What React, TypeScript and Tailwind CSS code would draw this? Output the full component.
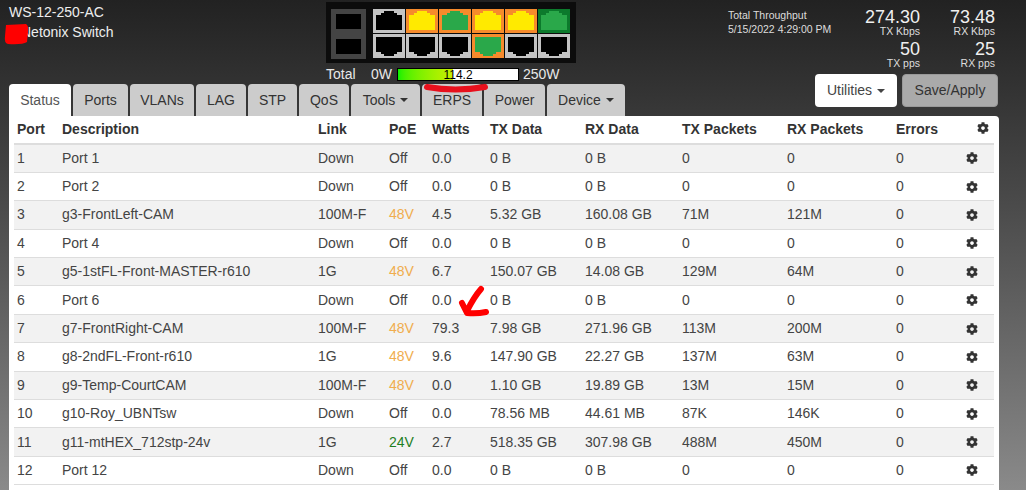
import { FaCog } from "react-icons/fa";

const TOP_PORTS = [
  { bg: "#c4c4c4", fill: "#000000" },
  { bg: "#f68b2c", fill: "#ffea00" },
  { bg: "#f68b2c", fill: "#2aa84a" },
  { bg: "#f68b2c", fill: "#ffea00" },
  { bg: "#f68b2c", fill: "#ffea00" },
  { bg: "#0c7a2c", fill: "#2aa84a" },
];

const BOTTOM_PORTS = [
  { bg: "#c4c4c4", fill: "#000000" },
  { bg: "#c4c4c4", fill: "#000000" },
  { bg: "#c4c4c4", fill: "#000000" },
  { bg: "#f68b2c", fill: "#2aa84a" },
  { bg: "#c4c4c4", fill: "#000000" },
  { bg: "#c4c4c4", fill: "#000000" },
];

const TABS = [
  { label: "Status", width: "w-[62px]", active: true },
  { label: "Ports", width: "w-[55px]" },
  { label: "VLANs", width: "w-[64px]" },
  { label: "LAG", width: "w-[50px]" },
  { label: "STP", width: "w-[49px]" },
  { label: "QoS", width: "w-[50px]" },
  { label: "Tools", width: "w-[69px]", caret: true },
  { label: "ERPS", width: "w-[60px]" },
  { label: "Power", width: "w-[61px]" },
  { label: "Device", width: "w-[78px]", caret: true },
];

const HEADERS = [
  "Port",
  "Description",
  "Link",
  "PoE",
  "Watts",
  "TX Data",
  "RX Data",
  "TX Packets",
  "RX Packets",
  "Errors",
];

const ROWS = [
  ["1", "Port 1", "Down", "Off", "0.0", "0 B", "0 B", "0", "0", "0"],
  ["2", "Port 2", "Down", "Off", "0.0", "0 B", "0 B", "0", "0", "0"],
  ["3", "g3-FrontLeft-CAM", "100M-F", "48V", "4.5", "5.32 GB", "160.08 GB", "71M", "121M", "0"],
  ["4", "Port 4", "Down", "Off", "0.0", "0 B", "0 B", "0", "0", "0"],
  ["5", "g5-1stFL-Front-MASTER-r610", "1G", "48V", "6.7", "150.07 GB", "14.08 GB", "129M", "64M", "0"],
  ["6", "Port 6", "Down", "Off", "0.0", "0 B", "0 B", "0", "0", "0"],
  ["7", "g7-FrontRight-CAM", "100M-F", "48V", "79.3", "7.98 GB", "271.96 GB", "113M", "200M", "0"],
  ["8", "g8-2ndFL-Front-r610", "1G", "48V", "9.6", "147.90 GB", "22.27 GB", "137M", "63M", "0"],
  ["9", "g9-Temp-CourtCAM", "100M-F", "48V", "0.0", "1.10 GB", "19.89 GB", "13M", "15M", "0"],
  ["10", "g10-Roy_UBNTsw", "Down", "Off", "0.0", "78.56 MB", "44.61 MB", "87K", "146K", "0"],
  ["11", "g11-mtHEX_712stp-24v", "1G", "24V", "2.7", "518.35 GB", "307.98 GB", "488M", "450M", "0"],
  ["12", "Port 12", "Down", "Off", "0.0", "0 B", "0 B", "0", "0", "0"],
];

const GRID = "grid grid-cols-[45px_256px_71px_43px_58px_95px_97px_105px_109px_70px_1fr]";

function poeColor(value: string) {
  if (value === "48V") return "text-[#f0ad4e]";
  if (value === "24V") return "text-[#1e7e1e]";
  return "";
}

function Port({ bg, fill, flip }: { bg: string; fill: string; flip?: boolean }) {
  return (
    <svg width="32" height="24" viewBox="0 0 32 24" className="block">
      <rect width="32" height="24" fill={bg} />
      <polygon
        fill={fill}
        transform={flip ? "matrix(1 0 0 -1 0 24)" : undefined}
        points="3,21 3,6 8,6 8,4 11,4 11,2 21,2 21,4 24,4 24,6 29,6 29,21"
      />
    </svg>
  );
}

function Sfp() {
  return <div className="w-[35px] h-[25px] border-[5px] border-[#444444] bg-black" />;
}

function Caret() {
  return (
    <span className="inline-block ml-[5px] align-middle border-x-[4px] border-t-[4px] border-x-transparent border-t-current" />
  );
}

function Stat({ value, label }: { value: string; label: string }) {
  return (
    <div className="text-right h-[32px]">
      <div className="text-[18px] leading-[18px] text-[#f0f0f0]">{value}</div>
      <div className="text-[10.5px] leading-[11px] text-[#dddddd]">{label}</div>
    </div>
  );
}

export default function App() {
  const watts = 114.2;

  return (
    <div className="relative h-[490px] w-[1026px] overflow-hidden bg-gradient-to-b from-[#222222] to-[#8a8a8a] font-['Liberation_Sans',Arial,sans-serif] text-[14px]">
      {/* Header */}
      <div className="flex h-[84px]">
        <div className="w-[326px] pl-[9px] pt-[2px] text-[#eeeeee] leading-[20px]">
          <div>WS-12-250-AC</div>
          <div className="pl-[12px]">Netonix Switch</div>
        </div>

        <div className="w-[250px]">
          <div className="mt-[2px] h-[61px] bg-[#0c0c0c] flex pl-[5px] pt-[7px] gap-[7px]">
            <div className="flex flex-col">
              <Sfp />
              <Sfp />
            </div>
            <div className="flex flex-col gap-px">
              <div className="flex gap-px">
                {TOP_PORTS.map((p, i) => (
                  <Port key={i} bg={p.bg} fill={p.fill} />
                ))}
              </div>
              <div className="flex gap-px">
                {BOTTOM_PORTS.map((p, i) => (
                  <Port key={i} bg={p.bg} fill={p.fill} flip />
                ))}
              </div>
            </div>
          </div>
          <div className="flex items-center h-[13px] mt-[5px] text-[#e8e8e8]">
            <span className="w-[45px]">Total</span>
            <span className="w-[26px]">0W</span>
            <div className="relative w-[122px] h-[13px] border border-black bg-white">
              <div
                className="h-full bg-gradient-to-r from-[#00f000] to-[#c8f000]"
                style={{ width: `${(watts / 250) * 100}%` }}
              />
              <span className="absolute inset-0 text-center text-[12px] leading-[12px] text-black">
                {watts}
              </span>
            </div>
            <span className="ml-[4px]">250W</span>
          </div>
        </div>

        <div className="w-[284px] pl-[152px] pt-[8px] text-[10.5px] leading-[14px] text-[#dddddd]">
          <div className="whitespace-nowrap">Total Throughput</div>
          <div className="whitespace-nowrap">5/15/2022 4:29:00 PM</div>
        </div>

        <div className="grid grid-cols-[60px_75px] pt-[8px] h-fit">
          <Stat value="274.30" label="TX Kbps" />
          <Stat value="73.48" label="RX Kbps" />
          <Stat value="50" label="TX pps" />
          <Stat value="25" label="RX pps" />
        </div>
      </div>

      {/* Tabs and buttons */}
      <div className="flex justify-between h-[32px] pl-[9px] pr-[28px]">
        <div className="flex gap-[2px]">
          {TABS.map((tab) => (
            <div
              key={tab.label}
              className={`${tab.width} flex items-center justify-center rounded-t-[4px] ${
                tab.active ? "bg-white text-[#555555]" : "bg-[#cccccc] text-[#333333]"
              }`}
            >
              {tab.label}
              {tab.caret && <Caret />}
            </div>
          ))}
        </div>
        <div className="flex gap-[5px] -mt-[10px] h-[33px]">
          <button className="w-[82px] rounded-[4px] bg-white text-[#444444]">
            Utilities
            <Caret />
          </button>
          <button className="w-[96px] rounded-[4px] bg-[#aaaaaa] border border-[#999999] text-[#333333]">
            Save/Apply
          </button>
        </div>
      </div>

      {/* Status table */}
      <div className="ml-[9px] w-[990px] bg-white rounded-tr-[4px] px-[5px] h-[400px]">
        <div className={`${GRID} h-[28.5px] items-center border-b-[2px] border-[#dddddd] font-bold text-[#333333]`}>
          {HEADERS.map((h) => (
            <div key={h} className="pl-[3px] whitespace-nowrap">
              {h}
            </div>
          ))}
          <div className="pl-[14px] -mt-[2px]">
            <FaCog className="w-[12px] h-[12px]" />
          </div>
        </div>
        {ROWS.map((row, i) => (
          <div
            key={row[0]}
            className={`${GRID} h-[28.4px] items-center border-b border-[#dddddd] text-[#444444] ${
              i % 2 === 0 ? "bg-[#f2f2f2]" : "bg-white"
            }`}
          >
            {row.map((cell, c) => (
              <div key={c} className={`pl-[3px] whitespace-nowrap ${c === 3 ? poeColor(cell) : ""}`}>
                {cell}
              </div>
            ))}
            <div className="pl-[3px] text-[#333333]">
              <FaCog className="w-[12px] h-[12px]" />
            </div>
          </div>
        ))}
      </div>

      {/* Red marker scribbles on the screenshot */}
      <svg width="1026" height="490" className="absolute inset-0 pointer-events-none">
        <path
          d="M6 25 L26 24 Q29 26 28 32 L27 42 Q22 45 8 44 Q4 43 5 36 Z"
          fill="#ff0000"
        />
        <path
          d="M427 87 Q455 92 485 87"
          fill="none"
          stroke="#e8101c"
          strokeWidth="6"
          strokeLinecap="round"
        />
        <path
          d="M481 289 Q474 297 467 311 M462 303 L467 313 Q477 314 486 312"
          fill="none"
          stroke="#ff0000"
          strokeWidth="6"
          strokeLinecap="round"
          strokeLinejoin="round"
        />
      </svg>
    </div>
  );
}
